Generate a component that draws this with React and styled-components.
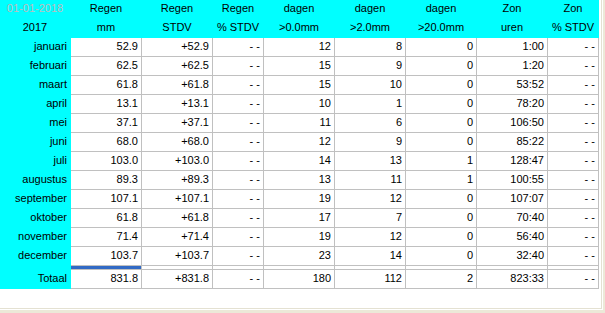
import React from "react";
import styled, { createGlobalStyle } from "styled-components";

const GlobalStyle = createGlobalStyle`
  body {
    margin: 0;
    background: #ece9d8;
    font-family: "Liberation Sans", Arial, sans-serif;
    font-size: 11px;
  }
`;

const months = [
  ["januari", "52.9", "+52.9", "12", "8", "0", "1:00"],
  ["februari", "62.5", "+62.5", "15", "9", "0", "1:20"],
  ["maart", "61.8", "+61.8", "15", "10", "0", "53:52"],
  ["april", "13.1", "+13.1", "10", "1", "0", "78:20"],
  ["mei", "37.1", "+37.1", "11", "6", "0", "106:50"],
  ["juni", "68.0", "+68.0", "12", "9", "0", "85:22"],
  ["juli", "103.0", "+103.0", "14", "13", "1", "128:47"],
  ["augustus", "89.3", "+89.3", "13", "11", "1", "100:55"],
  ["september", "107.1", "+107.1", "19", "12", "0", "107:07"],
  ["oktober", "61.8", "+61.8", "17", "7", "0", "70:40"],
  ["november", "71.4", "+71.4", "19", "12", "0", "56:40"],
  ["december", "103.7", "+103.7", "23", "14", "0", "32:40"],
];

const totals = ["Totaal", "831.8", "+831.8", "180", "112", "2", "823:33"];

const headTop = ["Regen", "Regen", "Regen", "dagen", "dagen", "dagen", "Zon", "Zon"];
const headBottom = ["mm", "STDV", "% STDV", ">0.0mm", ">2.0mm", ">20.0mm", "uren", "% STDV"];

// cells of one data row, in grid order (the "- -" columns have no value yet)
const toCells = ([name, mm, stdv, d0, d2, d20, zon]) => [
  name, mm, stdv, "- -", d0, d2, d20, zon, "- -",
];

export default function App() {
  return (
    <Screen>
      <GlobalStyle />
      <Bevel>
        <Pane>
          <Grid>
            <Cell $fixed $muted $align="center">01-01-2018</Cell>
            {headTop.map((t, i) => (
              <Cell key={"t" + i} $fixed $align="center">{t}</Cell>
            ))}
            <Cell $fixed $align="center">2017</Cell>
            {headBottom.map((t, i) => (
              <Cell key={"b" + i} $fixed $align="center">{t}</Cell>
            ))}

            {months.map((row) =>
              toCells(row).map((v, i) => (
                <Cell key={row[0] + i} $fixed={i === 0}>{v}</Cell>
              ))
            )}

            {Array.from({ length: 9 }).map((_, i) => (
              <Cell key={"sep" + i} $fixed={i === 0} $selected={i === 1} />
            ))}

            {toCells(totals).map((v, i) => (
              <Cell key={"tot" + i} $fixed={i === 0}>{v}</Cell>
            ))}
          </Grid>
        </Pane>
      </Bevel>
    </Screen>
  );
}

const Screen = styled.div`
  width: 605px;
  height: 313px;
  background: #ece9d8;
  overflow: hidden;
`;

const Bevel = styled.div`
  width: max-content;
  border-right: 1px solid #fff;
  border-bottom: 1px solid #fff;
`;

const Pane = styled.div`
  width: 601px;
  height: 308px;
  background: #fff;
  border-right: 1px solid #e4e1d2;
  border-bottom: 1px solid #e4e1d2;
`;

const Grid = styled.div`
  display: grid;
  grid-template-columns: 70px 70px 70px 50px 70px 70px 70px 70px 50px;
  grid-template-rows: repeat(14, 18px) 3px 18px;
  gap: 1px;
  padding: 0 1px 1px 0;
  width: max-content;
  background: #c0c0c0;
`;

const Cell = styled.div`
  box-sizing: border-box;
  overflow: hidden;
  white-space: nowrap;
  line-height: 17px;
  padding: ${({ $align }) => ($align === "center" ? "0" : "0 3px 0 2px")};
  text-align: ${({ $align }) => $align || "right"};
  color: ${({ $muted }) => ($muted ? "#bdbdbd" : "#000")};
  background: ${({ $fixed, $selected }) =>
    $selected ? "#316ac5" : $fixed ? "#00ffff" : "#fff"};
  box-shadow: ${({ $fixed }) => ($fixed ? "0 0 0 1px #00ffff" : "none")};
`;
